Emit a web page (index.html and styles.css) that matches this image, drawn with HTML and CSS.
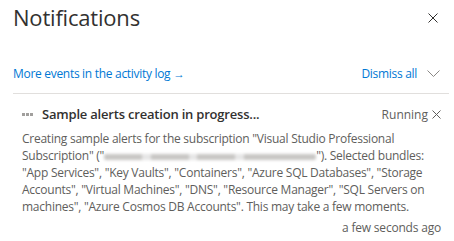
FILE: index.html
```html
<!DOCTYPE html>
<html>
<head>
<meta charset="utf-8">
<link rel="stylesheet" href="styles.css">
</head>
<body>
<div class="panel">
  <header class="head">
    <h1 class="title">Notifications</h1>
    <svg class="close" width="10" height="10" viewBox="0 0 10 10"><path d="M0.5 0.5 L9.5 9.5 M9.5 0.5 L0.5 9.5" stroke="#323130" stroke-width="1" fill="none"/></svg>
  </header>
  <div class="actions">
    <a class="link">More events in the activity log <span class="arrow">→</span></a>
    <div class="right">
      <a class="link">Dismiss all</a>
      <svg class="chev" width="13" height="7" viewBox="0 0 13 7"><path d="M0.5 0.5 L6.5 6.5 L12.5 0.5" stroke="#8a8886" stroke-width="1" fill="none"/></svg>
    </div>
  </div>
  <div class="divider"></div>
  <div class="item">
    <div class="item-head">
      <span class="dots"><i></i><i></i><i></i></span>
      <span class="item-title">Sample alerts creation in progress...</span>
      <span class="status">Running <svg class="x2" width="9" height="9" viewBox="0 0 9 9"><path d="M0.5 0.5 L8.5 8.5 M8.5 0.5 L0.5 8.5" stroke="#605e5c" stroke-width="1" fill="none"/></svg></span>
    </div>
    <p class="body">Creating sample alerts for the subscription "Visual Studio Professional Subscription" ("<span class="blur"></span>"). Selected bundles: "App Services", "Key Vaults", "Containers", "Azure SQL Databases", "Storage Accounts", "Virtual Machines", "DNS", "Resource Manager", "SQL Servers on machines", "Azure Cosmos DB Accounts". This may take a few moments.</p>
    <div class="time">a few seconds ago</div>
  </div>
</div>
</body>
</html>
```
FILE: styles.css
```css
html, body { margin: 0; padding: 0; background: #fff; }
body { font-family: "Open Sans", "Noto Sans", sans-serif; color: #323130; }
.panel { width: 454px; height: 241px; padding: 0 5px 0 13px; box-sizing: border-box; }
.head { display: flex; justify-content: space-between; align-items: center; height: 34px; padding-right: 11px; }
.title { margin: 0; font-size: 22px; font-weight: 400; color: #323130; letter-spacing: -0.2px; line-height: 30px; }
.close { display: block; margin-top: 1px; }
.actions { display: flex; justify-content: space-between; align-items: center; margin-top: 30px; height: 18px; padding-right: 9px; }
.link { color: #0078d4; font-size: 12px; text-decoration: none; letter-spacing: -0.3px; }
.arrow { font-size: 11.5px; }
.right { display: flex; align-items: center; gap: 10px; }
.chev { display: block; }
.divider { height: 1px; background: #e1dfdd; margin-top: 11px; }
.item { padding: 12px 8px 0 9px; }
.item-head { display: flex; align-items: center; height: 16px; }
.dots { display: flex; gap: 1px; width: 20px; }
.dots i { width: 3px; height: 3px; background: #a19f9d; display: block; }
.item-title { font-weight: 600; font-size: 13px; color: #323130; letter-spacing: -0.2px; flex: 1; }
.status { font-size: 12px; color: #605e5c; display: flex; align-items: center; gap: 4px; }
.body { margin: 8px 0 0 0; font-size: 12px; line-height: 17px; color: #605e5c; letter-spacing: -0.25px; }
.blur { display: inline-block; width: 212px; height: 6px; vertical-align: 0; background: linear-gradient(90deg, #c8c6c4 0 18%, #e6e6e6 18% 22%, #c8c6c4 22% 40%, #e6e6e6 40% 44%, #c8c6c4 44% 62%, #e6e6e6 62% 66%, #c8c6c4 66% 100%); filter: blur(1.5px); border-radius: 2px; }
.time { text-align: right; font-size: 12px; line-height: 17px; color: #605e5c; margin-top: 4px; letter-spacing: -0.2px; }
```
